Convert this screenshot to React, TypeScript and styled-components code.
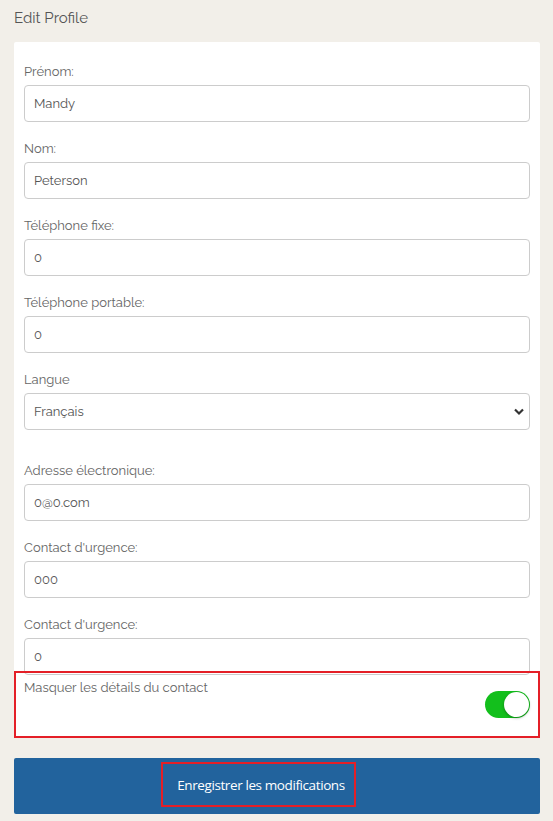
import React from 'react';
import styled, { createGlobalStyle } from 'styled-components';

const GlobalStyle = createGlobalStyle`
  html, body {
    margin: 0;
    padding: 0;
    background: #f2efe9;
  }
  body {
    font-family: 'Raleway', 'Lato', 'Noto Sans', sans-serif;
  }
  * { box-sizing: border-box; }
`;

const Page = styled.div`
  padding: 8px 13px 6px 14px;
`;

const Title = styled.h1`
  margin: 0 0 14px;
  font-size: 15px;
  font-weight: 400;
  line-height: 20px;
  color: #555;
`;

const Card = styled.div`
  background: #fff;
  border-radius: 2px;
`;

const Fields = styled.div`
  padding: 21px 10px 0;
`;

const Field = styled.div<{ $extra?: boolean }>`
  margin-bottom: ${(p) => (p.$extra ? '32px' : '18px')};
  &:last-child {
    margin-bottom: 0;
  }
`;

const Label = styled.label`
  display: block;
  font-size: 13px;
  line-height: 18px;
  color: #666;
  margin-bottom: 4px;
`;

const Input = styled.input`
  display: block;
  width: 100%;
  height: 37px;
  padding: 0 9px;
  border: 1px solid #ccc;
  border-radius: 4px;
  font-family: inherit;
  font-size: 13px;
  color: #555;
  background: #fff;
  outline: none;
`;

const SelectWrap = styled.div`
  position: relative;
`;

const Select = styled.select`
  display: block;
  width: 100%;
  height: 37px;
  padding: 0 9px;
  border: 1px solid #ccc;
  border-radius: 4px;
  font-family: inherit;
  font-size: 13px;
  color: #555;
  background: #fff;
  appearance: none;
  outline: none;
`;

const Chevron = styled.svg`
  position: absolute;
  right: 5px;
  top: 14px;
  pointer-events: none;
`;

const ToggleRow = styled.div`
  margin-top: -4px;
  border: 2px solid #e41f27;
  height: 67px;
  padding: 6px 8px 0;
  display: flex;
  justify-content: space-between;
  align-items: flex-start;
`;

const ToggleLabel = styled.span`
  font-size: 13px;
  line-height: 18px;
  color: #666;
`;

const Switch = styled.span<{ $on: boolean }>`
  margin-top: 12px;
  width: 45px;
  height: 27px;
  border-radius: 14px;
  background: ${(p) => (p.$on ? '#13bf1c' : '#ccc')};
  position: relative;
  flex-shrink: 0;
`;

const Knob = styled.span`
  position: absolute;
  top: 1px;
  right: 1px;
  width: 25px;
  height: 25px;
  border-radius: 50%;
  background: #fff;
  box-shadow: 0 1px 3px rgba(0, 0, 0, 0.35);
`;

const SaveButton = styled.button`
  display: flex;
  justify-content: center;
  align-items: center;
  width: 100%;
  height: 56px;
  margin-top: 20px;
  padding: 0 0 3px;
  border: none;
  border-radius: 2px;
  background: #22639d;
  cursor: pointer;
`;

const SaveText = styled.span`
  border: 2px solid #e41f27;
  height: 45px;
  display: flex;
  align-items: center;
  margin-right: 37px;
  padding: 0 9px 0 14px;
  color: #fff;
  font-family: 'Open Sans', 'Noto Sans', sans-serif;
  font-size: 13.5px;
  letter-spacing: -0.4px;
`;

const fields = [
  { label: 'Prénom:', value: 'Mandy' },
  { label: 'Nom:', value: 'Peterson' },
  { label: 'Téléphone fixe:', value: '0' },
  { label: 'Téléphone portable:', value: '0' },
];

const fields2 = [
  { label: 'Adresse électronique:', value: '0@0.com' },
  { label: "Contact d'urgence:", value: '000' },
  { label: "Contact d'urgence:", value: '0' },
];

export default function App() {
  return (
    <Page>
      <GlobalStyle />
      <Title>Edit Profile</Title>
      <Card>
        <Fields>
          {fields.map((f) => (
            <Field key={f.label}>
              <Label>{f.label}</Label>
              <Input defaultValue={f.value} />
            </Field>
          ))}
          <Field $extra>
            <Label>Langue</Label>
            <SelectWrap>
              <Select defaultValue="fr">
                <option value="fr">Français</option>
                <option value="en">English</option>
              </Select>
              <Chevron width="12" height="9" viewBox="0 0 12 9">
                <path d="M2 2.5 L6 6.5 L10 2.5" fill="none" stroke="#333" strokeWidth="2.2" />
              </Chevron>
            </SelectWrap>
          </Field>
          {fields2.map((f, i) => (
            <Field key={i}>
              <Label>{f.label}</Label>
              <Input defaultValue={f.value} />
            </Field>
          ))}
        </Fields>
        <ToggleRow>
          <ToggleLabel>Masquer les détails du contact</ToggleLabel>
          <Switch $on>
            <Knob />
          </Switch>
        </ToggleRow>
      </Card>
      <SaveButton>
        <SaveText>Enregistrer les modifications</SaveText>
      </SaveButton>
    </Page>
  );
}
